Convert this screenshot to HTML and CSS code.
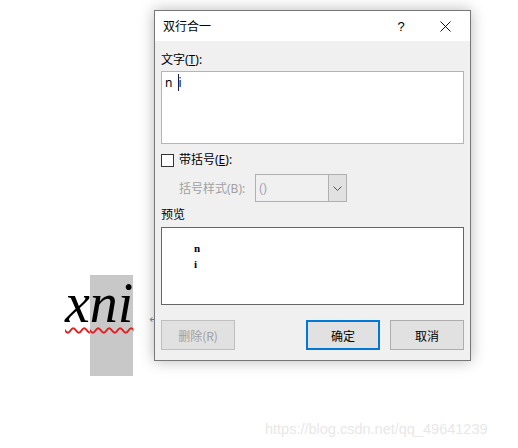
FILE: index.html
```html
<!DOCTYPE html>
<html lang="zh-CN">
<head>
    <meta charset="UTF-8">
    <title>双行合一</title>
    <link rel="stylesheet" href="styles.css">
</head>
<body>
    <div class="doc">
        <p class="doc-line"><span class="word">x</span><span class="word sel">ni</span><span class="para-mark">↵</span></p>
    </div>

    <div class="dialog">
        <div class="title-bar">
            <span class="title">双行合一</span>
            <span class="help">?</span>
            <span class="close">
                <svg width="11" height="11" viewBox="0 0 11 11"><path d="M0.5 0.5 L10.5 10.5 M10.5 0.5 L0.5 10.5" stroke="#111" stroke-width="1" fill="none"/></svg>
            </span>
        </div>

        <div class="dialog-body">
            <div class="label">文字(<u>T</u>):</div>
            <div class="text-box">n <span class="caret">i</span></div>

            <div class="check-row">
                <span class="checkbox"></span>
                <span>带括号(<u>E</u>):</span>
            </div>

            <div class="combo-row">
                <span class="combo-label">括号样式(B):</span>
                <div class="combo">
                    <span class="combo-value">()</span>
                    <span class="combo-btn">
                        <svg width="9" height="5" viewBox="0 0 9 5"><polyline points="0.5,0.5 4.5,4.5 8.5,0.5" stroke="#555" stroke-width="1" fill="none"/></svg>
                    </span>
                </div>
            </div>

            <div class="label preview-label">预览</div>
            <div class="preview">
                <div>n</div>
                <div>i</div>
            </div>

            <div class="buttons">
                <button class="btn disabled">删除(R)</button>
                <span class="spacer"></span>
                <button class="btn default">确定</button>
                <button class="btn">取消</button>
            </div>
        </div>
    </div>

    <div class="watermark">https://blog.csdn.net/qq_49641239</div>
</body>
</html>
```

FILE: styles.css
```css
* {
    margin: 0;
    padding: 0;
    box-sizing: border-box;
}

body {
    width: 518px;
    height: 448px;
    background: #fff;
    font-family: "Noto Sans", "Noto Sans CJK SC", sans-serif;
    font-size: 12px;
    color: #000;
    position: relative;
    overflow: hidden;
}

/* document behind the dialog */
.doc {
    padding: 275px 0 0 65px;
}

.doc-line {
    font-family: "Liberation Serif", serif;
    font-style: italic;
    font-size: 56px;
    line-height: 56px;
    white-space: nowrap;
}

.word {
    text-decoration: underline wavy #e02020;
    text-decoration-thickness: 1.5px;
    text-underline-offset: 5px;
}

.sel {
    display: inline-block;
    background: #c8c8c8;
    line-height: 56px;
    padding-bottom: 45px;
}

.para-mark {
    font-family: "DejaVu Sans", sans-serif;
    font-style: normal;
    font-size: 11px;
    color: #8a8a8a;
    margin-left: 16px;
    vertical-align: -1px;
}

/* dialog window */
.dialog {
    position: absolute;
    left: 154px;
    top: 10px;
    width: 317px;
    height: 351px;
    border: 1px solid #777;
    background: #f0f0f0;
    box-shadow: 0 0 14px rgba(0, 0, 0, 0.28);
}

.title-bar {
    height: 30px;
    background: #fff;
    display: flex;
    align-items: center;
    padding-left: 8px;
}

.title {
    flex: 1;
    font-size: 12px;
}

.help {
    font-family: "Liberation Sans", sans-serif;
    font-size: 13px;
    width: 30px;
    margin-right: 8px;
    text-align: center;
}

.close {
    width: 46px;
    display: flex;
    justify-content: center;
    padding-right: 4px;
}

.dialog-body {
    padding: 11px 6px 0 6px;
}

.label {
    line-height: 16px;
}

.text-box {
    margin-top: 3px;
    height: 73px;
    background: #fff;
    border: 1px solid #b5b5b5;
    padding: 3px 0 0 3px;
    line-height: 16px;
    font-family: "Noto Sans", sans-serif;
}

.caret {
    border-left: 1px solid #1a1a5a;
    padding-left: 0;
    margin-left: 2px;
}

.check-row {
    margin-top: 8px;
    display: flex;
    align-items: center;
    gap: 5px;
    line-height: 16px;
}

.checkbox {
    width: 13px;
    height: 13px;
    border: 1px solid #333;
    background: #fff;
}

.combo-row {
    margin-top: 6px;
    display: flex;
    align-items: center;
    padding-left: 18px;
}

.combo-label {
    color: #a0a0a0;
    width: 76px;
}

.combo {
    width: 92px;
    height: 28px;
    border: 1px solid #b0b0b0;
    display: flex;
}

.combo-value {
    flex: 1;
    color: #a6a0b8;
    line-height: 26px;
    padding-left: 3px;
    font-family: "Liberation Sans", sans-serif;
}

.combo-btn {
    width: 18px;
    background: #e1e1e1;
    border-left: 1px solid #b0b0b0;
    display: flex;
    align-items: center;
    justify-content: center;
}

.preview-label {
    margin-top: 5px;
}

.preview {
    margin-top: 4px;
    height: 78px;
    background: #fff;
    border: 1px solid #666;
    padding: 12px 0 0 32px;
    font-family: "Liberation Serif", serif;
    font-size: 11px;
    font-weight: bold;
    line-height: 16px;
}

.buttons {
    margin-top: 15px;
    display: flex;
    gap: 10px;
}

.spacer {
    flex: 1;
}

.btn {
    width: 74px;
    height: 30px;
    background: #e1e1e1;
    border: 1px solid #adadad;
    font-family: "Noto Sans CJK SC", sans-serif;
    font-size: 12px;
    color: #000;
}

.btn.disabled {
    color: #a0a0a0;
    border-color: #bfbfbf;
}

.btn.default {
    border: 2px solid #0078d7;
}

.watermark {
    position: absolute;
    left: 265px;
    top: 421px;
    font-family: "Liberation Sans", sans-serif;
    font-size: 14.5px;
    color: #e8e8e8;
}
```
